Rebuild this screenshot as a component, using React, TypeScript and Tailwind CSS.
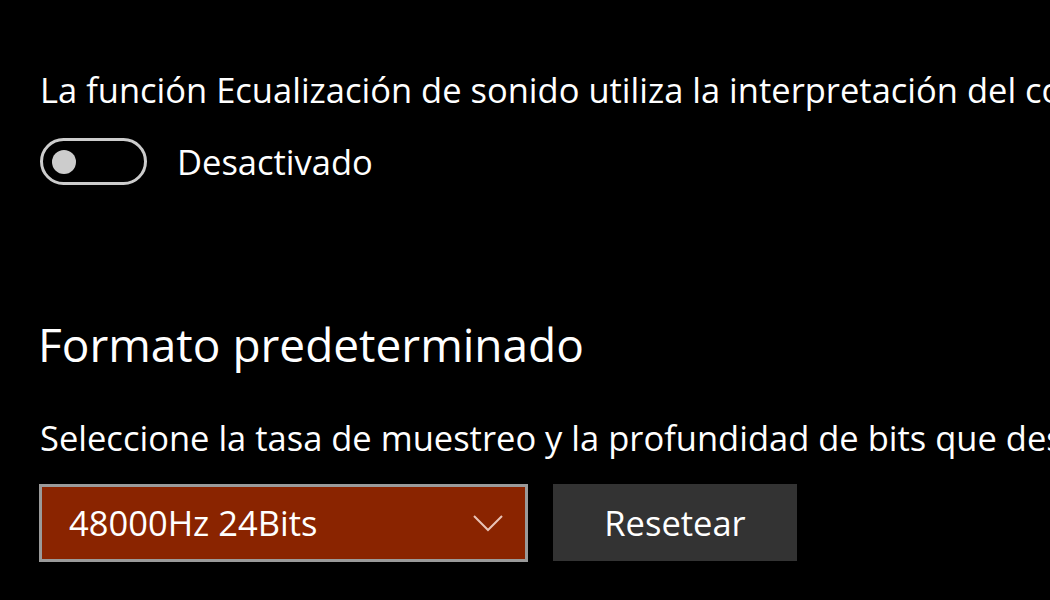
export default function App() {
  const font = { fontFamily: '"Open Sans", "Noto Sans", sans-serif' };
  return (
    <div
      className="w-[1050px] h-[600px] overflow-hidden bg-black text-white pl-[40px] pt-[68px]"
      style={font}
    >
      <div className="text-[34.5px] leading-[44px] whitespace-nowrap">
        La función Ecualización de sonido utiliza la interpretación del comportamiento
      </div>
      <div className="mt-[26px] flex items-center h-[47px]">
        <div className="w-[107px] h-[47px] rounded-full border-[3px] border-[#cccccc] flex items-center pl-[9px]">
          <div className="w-[24px] h-[24px] rounded-full bg-[#cccccc]" />
        </div>
        <div className="ml-[30px] text-[34.5px] leading-[44px]">Desactivado</div>
      </div>
      <div className="mt-[129px] -ml-[2px] text-[46px] leading-[60px] whitespace-nowrap">
        Formato predeterminado
      </div>
      <div className="mt-[42px] text-[34.5px] leading-[44px] whitespace-nowrap">
        Seleccione la tasa de muestreo y la profundidad de bits que desea
      </div>
      <div className="mt-[24px] flex items-start gap-[25px] -ml-[1px]">
        <div className="w-[489px] h-[78px] bg-[#8a2400] border-[3px] border-[#9a9a9a] flex items-center pl-[27px] pr-[22px] justify-between">
          <span className="text-[34.5px] leading-[44px]">48000Hz 24Bits</span>
          <svg width="30" height="17" viewBox="0 0 30 17" fill="none">
            <polyline points="1,1 15,15 29,1" stroke="#e9c3b6" strokeWidth="2" />
          </svg>
        </div>
        <div className="w-[244px] h-[77px] bg-[#333333] flex items-center justify-center text-[34.5px] leading-[44px]">
          Resetear
        </div>
      </div>
    </div>
  );
}
